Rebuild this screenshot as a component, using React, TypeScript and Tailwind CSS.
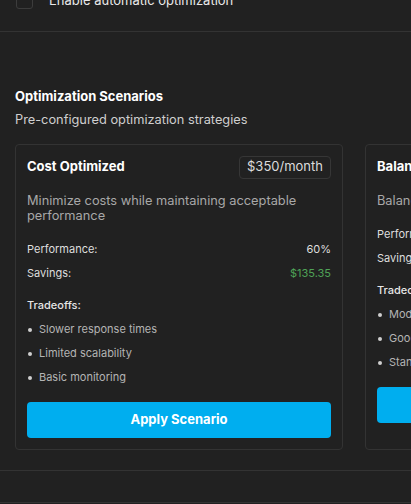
import React from "react";

type Scenario = {
  name: string;
  price: string;
  description: string;
  performance: string;
  savings: string;
  tradeoffs: string[];
};

const scenarios: Scenario[] = [
  {
    name: "Cost Optimized",
    price: "$350/month",
    description: "Minimize costs while maintaining acceptable performance",
    performance: "60%",
    savings: "$135.35",
    tradeoffs: ["Slower response times", "Limited scalability", "Basic monitoring"],
  },
  {
    name: "Balanced",
    price: "$485/month",
    description: "Balance cost and performance",
    performance: "80%",
    savings: "$62.40",
    tradeoffs: ["Moderate response times", "Good scalability", "Standard monitoring"],
  },
];

function ScenarioCard({ s }: { s: Scenario }) {
  return (
    <div className="w-[328px] shrink-0 rounded-[4px] border border-[#333333] p-[11px]">
      <div className="flex items-center justify-between">
        <div className="text-[13px] font-bold text-white whitespace-nowrap">{s.name}</div>
        <div className="flex h-[23px] items-center rounded-[4px] border border-[#363636] px-[7px] text-[13px] text-[#dcdcdc] whitespace-nowrap">
          {s.price}
        </div>
      </div>
      <p className="mt-[14px] text-[12.8px] leading-[15px] text-[#a8a8a8]">{s.description}</p>
      <div className="mt-[15px] flex h-6 items-center justify-between text-[11px] text-[#dedede]">
        <span>Performance:</span>
        <span>{s.performance}</span>
      </div>
      <div className="flex h-6 items-center justify-between text-[11px] text-[#dedede]">
        <span>Savings:</span>
        <span className="text-[#4fa257]">{s.savings}</span>
      </div>
      <div className="mt-2 flex h-6 items-center text-[11px] font-medium text-[#e6e6e6]">Tradeoffs:</div>
      <ul>
        {s.tradeoffs.map((t) => (
          <li key={t} className="flex h-6 items-center gap-[7px] text-[11px] text-[#b4b4b4] whitespace-nowrap">
            <span className="ml-[1px] h-[4px] w-[4px] rounded-full bg-[#cfcfcf]" />
            {t}
          </li>
        ))}
      </ul>
      <button className="mt-[12px] flex h-9 w-full items-center justify-center rounded-[4px] bg-[#00aeef] text-[13px] font-bold text-white">
        Apply Scenario
      </button>
    </div>
  );
}

export default function App() {
  return (
    <div
      className="h-[504px] w-[411px] overflow-hidden bg-[#212121] text-white"
      style={{ fontFamily: "Inter, 'Noto Sans', sans-serif" }}
    >
      {/* automation toggle */}
      <div className="-mt-[9px] border-b border-[#333333] pb-[20px] pl-4">
        <label className="flex items-center gap-[16px]">
          <span className="h-[17px] w-[17px] rounded-[3px] border border-[#3c3c3c]" />
          <span className="text-[13px] text-[#e8e8e8]">Enable automatic optimization</span>
        </label>
      </div>

      {/* scenarios */}
      <div className="border-b border-[#333333] pb-[20px] pt-[54px]">
        <div className="px-[15px]">
          <h3 className="text-[13px] font-bold leading-5 text-white">Optimization Scenarios</h3>
          <p className="mt-1 text-[12.8px] leading-5 text-[#cfcfcf]">Pre-configured optimization strategies</p>
        </div>
        <div className="mt-[14px] flex gap-[22px] overflow-hidden px-[15px]">
          {scenarios.map((s) => (
            <ScenarioCard key={s.name} s={s} />
          ))}
        </div>
      </div>

      <div className="h-[32px] border-b border-[#333333]" />
    </div>
  );
}
